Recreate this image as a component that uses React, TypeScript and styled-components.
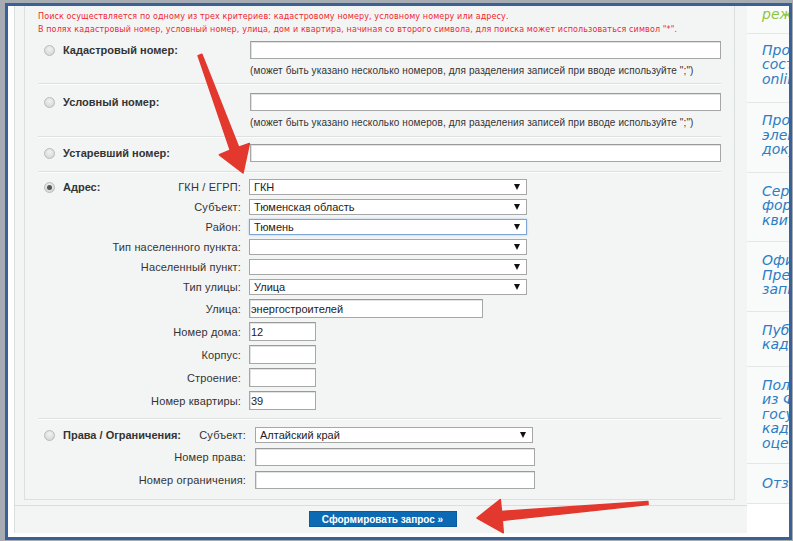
import React from "react";
import styled, { createGlobalStyle } from "styled-components";

const Global = createGlobalStyle`
  html, body { margin: 0; padding: 0; }
  body { background: #a7acb2; font-family: "Liberation Sans", Arial, sans-serif; }
  * { box-sizing: border-box; }
`;

const Frame = styled.div`
  position: relative;
  margin: 3px 0 0 5px;
  width: 787px;
  height: 537px;
  border: 3px solid #3a6195;
  background: #fff;
  display: flex;
  align-items: flex-start;
  padding-left: 6px;
  overflow: hidden;
`;

const Panel = styled.div`
  width: 733px;
  height: 527px;
  flex: none;
  border-left: 1px solid #dcdede;
  background: #f3f5f5;
  display: flex;
  flex-direction: column;
`;

const FormArea = styled.div`
  padding: 0 12px 0 9px;
`;

const InnerBox = styled.div`
  width: 711px;
  border: 1px solid #dcdfdf;
  border-top: none;
  padding: 4px 13px 0 13px;
`;

const Notice = styled.div`
  font-family: "DejaVu Sans", Verdana, sans-serif;
  font-size: 8px;
  line-height: 13px;
  letter-spacing: 0.12px;
  color: #f0262f;
  white-space: nowrap;
`;

const Section = styled.div<{ $pad: string; $last?: boolean }>`
  display: grid;
  grid-template-columns: 25px 187px 1fr;
  align-items: center;
  padding: ${(p) => p.$pad};
  border-bottom: ${(p) => (p.$last ? "none" : "1px solid #dfe1e1")};
  box-shadow: ${(p) => (p.$last ? "none" : "0 1px 0 #fbfcfc")};
`;

const FieldGrid = styled.div<{ $pad: string; $labelW: number; $gap: number; $rowGap: number; $last?: boolean }>`
  display: grid;
  grid-template-columns: 25px ${(p) => p.$labelW}px 1fr;
  row-gap: ${(p) => p.$rowGap}px;
  align-items: center;
  padding: ${(p) => p.$pad};
  border-bottom: ${(p) => (p.$last ? "none" : "1px solid #dfe1e1")};
  box-shadow: ${(p) => (p.$last ? "none" : "0 1px 0 #fbfcfc")};
  & > .field { margin-left: ${(p) => p.$gap}px; }
`;

const RadioCell = styled.div`
  display: flex;
  align-items: center;
`;

const Radio = styled.span<{ $checked?: boolean }>`
  margin-left: 6px;
  width: 11px;
  height: 11px;
  border-radius: 50%;
  border: 1px solid #b9bbbb;
  background: radial-gradient(circle at 50% 35%, #f2f2f2 0%, #dadada 70%, #cfcfcf 100%);
  display: flex;
  align-items: center;
  justify-content: center;
  &::after {
    content: "";
    width: 5px;
    height: 5px;
    border-radius: 50%;
    background: ${(p) => (p.$checked ? "#555" : "transparent")};
  }
`;

const Title = styled.span`
  font-size: 11px;
  font-weight: bold;
  color: #333;
  white-space: nowrap;
`;

const LabelCell = styled.div`
  display: flex;
  justify-content: space-between;
  align-items: center;
  font-size: 11px;
  color: #333;
  white-space: nowrap;
`;

const SubLabel = styled.span`
  margin-left: auto;
  font-size: 11px;
  letter-spacing: 0.15px;
  color: #333;
`;

const TextInput = styled.input<{ $w: number; $h: number }>`
  display: block;
  width: ${(p) => p.$w}px;
  height: ${(p) => p.$h}px;
  border: 1px solid #a7a7a7;
  border-top-color: #9a9a9a;
  box-shadow: inset 1px 1px 0 #e2e2e2;
  background: #fff;
  font-family: "Liberation Sans", Arial, sans-serif;
  font-size: 11px;
  color: #222;
  padding: 0 1px;
  margin: 0;
  outline: none;
`;

const SelectBox = styled.div<{ $w: number; $focus?: boolean }>`
  width: ${(p) => p.$w}px;
  height: 16px;
  border: 1px solid ${(p) => (p.$focus ? "#7da6d6" : "#a7a7a7")};
  box-shadow: ${(p) => (p.$focus ? "0 0 2px #a9c8ec" : "none")};
  background: #fff;
  display: flex;
  align-items: center;
  padding: 0 6px 0 4px;
  font-size: 11px;
  color: #222;
  &::after {
    content: "";
    margin-left: auto;
    border-left: 3.5px solid transparent;
    border-right: 3.5px solid transparent;
    border-top: 6px solid #111;
  }
`;

const Hint = styled.div`
  grid-column: 3;
  margin-top: 6px;
  font-size: 10px;
  line-height: 12px;
  letter-spacing: 0.1px;
  color: #333;
  white-space: nowrap;
`;

const Spacer = styled.div``;

const BottomBar = styled.div`
  margin-top: 5px;
  border-top: 1px solid #dcdede;
  display: flex;
  justify-content: center;
  padding: 5px 0 0 3px;
  height: 27px;
`;

const SubmitButton = styled.button`
  width: 148px;
  height: 16px;
  border: 1px solid #0a5b9c;
  background: #0b6ab3;
  color: #fff;
  font-family: "Liberation Sans", Arial, sans-serif;
  font-size: 10px;
  font-weight: bold;
  padding: 0;
  cursor: pointer;
`;

const Sidebar = styled.div`
  width: 42px;
  flex: none;
  overflow: hidden;
  display: flex;
  flex-direction: column;
`;

const SideItem = styled.div<{ $pad: string }>`
  padding: ${(p) => p.$pad};
  padding-left: 15px;
  background: #f9fafa;
  border-bottom: 1px solid #e4e7e8;
`;

const SideLine = styled.div<{ $green?: boolean }>`
  font-family: "DejaVu Sans", Verdana, sans-serif;
  font-style: italic;
  font-size: 14px;
  line-height: 14.5px;
  white-space: nowrap;
  color: ${(p) => (p.$green ? "#8cc63e" : "#2b7dc4")};
`;

const Arrows = styled.svg`
  position: absolute;
  left: -8px;
  top: -6px;
  width: 793px;
  height: 541px;
  pointer-events: none;
`;

const sideItems: { lines: string[]; pad: string; green?: boolean }[] = [
  { lines: ["режиме"], pad: "1px 0 11px", green: true },
  { lines: ["Проверка", "состояния запроса", "online"], pad: "9px 0 16px" },
  { lines: ["Проверка", "электронного", "документа"], pad: "10px 0 15px" },
  { lines: ["Сервис", "формирования", "квитанций"], pad: "11px 0 14px" },
  { lines: ["Офисы и приемные.", "Предварительная", "запись на прием"], pad: "11px 0 14px" },
  { lines: ["Публичная", "кадастровая карта"], pad: "11px 0 14px" },
  { lines: ["Получение сведений", "из Фонда данных", "государственной", "кадастровой", "оценки"], pad: "11px 0 13px" },
  { lines: ["Отзывы"], pad: "12px 0 12px" },
];

export default function App() {
  return (
    <>
      <Global />
      <Frame>
        <Panel>
          <FormArea>
            <InnerBox>
              <Notice>
                Поиск осуществляется по одному из трех критериев: кадастровому номеру, условному номеру или адресу.
                <br />
                В полях кадастровый номер, условный номер, улица, дом и квартира, начиная со второго символа, для поиска может использоваться символ "*".
              </Notice>

              <Section $pad="5px 0 6px">
                <RadioCell><Radio /></RadioCell>
                <Title>Кадастровый номер:</Title>
                <TextInput $w={471} $h={18} readOnly value="" />
                <Hint>(может быть указано несколько номеров, для разделения записей при вводе используйте ";")</Hint>
              </Section>

              <Section $pad="9px 0 7px">
                <RadioCell><Radio /></RadioCell>
                <Title>Условный номер:</Title>
                <TextInput $w={471} $h={18} readOnly value="" />
                <Hint>(может быть указано несколько номеров, для разделения записей при вводе используйте ";")</Hint>
              </Section>

              <Section $pad="7px 0 9px">
                <RadioCell><Radio /></RadioCell>
                <Title>Устаревший номер:</Title>
                <TextInput $w={471} $h={18} readOnly value="" />
              </Section>

              <FieldGrid $pad="7px 0 8px" $labelW={178} $gap={8} $rowGap={4}>
                <RadioCell><Radio $checked /></RadioCell>
                <LabelCell><Title>Адрес:</Title><SubLabel>ГКН / ЕГРП:</SubLabel></LabelCell>
                <div className="field"><SelectBox $w={278}>ГКН</SelectBox></div>

                <Spacer />
                <LabelCell><SubLabel>Субъект:</SubLabel></LabelCell>
                <div className="field"><SelectBox $w={278}>Тюменская область</SelectBox></div>

                <Spacer />
                <LabelCell><SubLabel>Район:</SubLabel></LabelCell>
                <div className="field"><SelectBox $w={278} $focus>Тюмень</SelectBox></div>

                <Spacer />
                <LabelCell><SubLabel>Тип населенного пункта:</SubLabel></LabelCell>
                <div className="field"><SelectBox $w={278} /></div>

                <Spacer />
                <LabelCell><SubLabel>Населенный пункт:</SubLabel></LabelCell>
                <div className="field"><SelectBox $w={278} /></div>

                <Spacer />
                <LabelCell><SubLabel>Тип улицы:</SubLabel></LabelCell>
                <div className="field"><SelectBox $w={278}>Улица</SelectBox></div>

                <Spacer />
                <LabelCell><SubLabel>Улица:</SubLabel></LabelCell>
                <div className="field"><TextInput $w={234} $h={19} readOnly value="энергостроителей" /></div>

                <Spacer />
                <LabelCell><SubLabel>Номер дома:</SubLabel></LabelCell>
                <div className="field"><TextInput $w={67} $h={19} readOnly value="12" /></div>

                <Spacer />
                <LabelCell><SubLabel>Корпус:</SubLabel></LabelCell>
                <div className="field"><TextInput $w={67} $h={19} readOnly value="" /></div>

                <Spacer />
                <LabelCell><SubLabel>Строение:</SubLabel></LabelCell>
                <div className="field"><TextInput $w={67} $h={19} readOnly value="" /></div>

                <Spacer />
                <LabelCell><SubLabel>Номер квартиры:</SubLabel></LabelCell>
                <div className="field"><TextInput $w={67} $h={19} readOnly value="39" /></div>
              </FieldGrid>

              <FieldGrid $pad="8px 0 10px" $labelW={183} $gap={9} $rowGap={5} $last>
                <RadioCell><Radio /></RadioCell>
                <LabelCell><Title>Права / Ограничения:</Title><SubLabel>Субъект:</SubLabel></LabelCell>
                <div className="field"><SelectBox $w={278}>Алтайский край</SelectBox></div>

                <Spacer />
                <LabelCell><SubLabel>Номер права:</SubLabel></LabelCell>
                <div className="field"><TextInput $w={280} $h={18} readOnly value="" /></div>

                <Spacer />
                <LabelCell><SubLabel>Номер ограничения:</SubLabel></LabelCell>
                <div className="field"><TextInput $w={280} $h={18} readOnly value="" /></div>
              </FieldGrid>
            </InnerBox>
          </FormArea>
          <BottomBar>
            <SubmitButton>Сформировать запрос »</SubmitButton>
          </BottomBar>
        </Panel>

        <Sidebar>
          {sideItems.map((it, i) => (
            <SideItem key={i} $pad={it.pad}>
              {it.lines.map((l, j) => (
                <SideLine key={j} $green={it.green}>{l}</SideLine>
              ))}
            </SideItem>
          ))}
        </Sidebar>

        <Arrows viewBox="0 0 793 541">
          <polygon
            points="201.9,54.3 238.6,147.1 249.4,143.4 243,173 219.4,154.8 230.2,150.1 198.1,55.7"
            fill="#e3382d"
            stroke="#e3382d"
            strokeWidth="1.5"
            strokeLinejoin="round"
          />
          <polygon
            points="648.1,504.6 502.3,520.4 503.3,532.8 477,518 500.3,499.5 501.5,511.4 647.9,501.4"
            fill="#e3382d"
            stroke="#e3382d"
            strokeWidth="1.5"
            strokeLinejoin="round"
          />
        </Arrows>
      </Frame>
    </>
  );
}
